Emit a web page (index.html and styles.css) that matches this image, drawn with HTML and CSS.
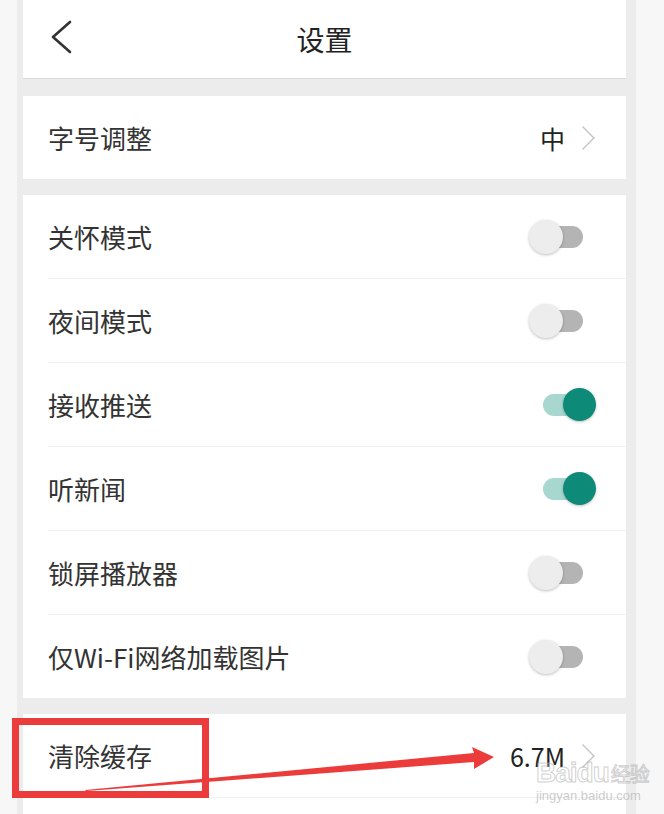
FILE: index.html
```html
<!DOCTYPE html>
<html lang="zh-CN">
<head>
    <meta charset="UTF-8">
    <meta name="viewport" content="width=device-width, initial-scale=1.0">
    <title>设置</title>
    <link rel="stylesheet" href="styles.css">
</head>
<body>
    <div class="moldura">
        <div class="tela">
            <div class="topo">
                <svg class="voltar" width="24" height="36" viewBox="0 0 24 36">
                    <polyline points="19,2 2,17 19,32" fill="none" stroke="#333" stroke-width="2.6" stroke-linecap="round" stroke-linejoin="round"/>
                </svg>
                <h1>设置</h1>
            </div>

            <div class="grupo">
                <div class="linha">
                    <span class="rotulo">字号调整</span>
                    <span class="valor">中<span class="seta"></span></span>
                </div>
            </div>

            <div class="grupo">
                <div class="linha">
                    <span class="rotulo">关怀模式</span>
                    <span class="chave"><span class="trilho"></span><span class="bolinha"></span></span>
                </div>
                <div class="linha">
                    <span class="rotulo">夜间模式</span>
                    <span class="chave"><span class="trilho"></span><span class="bolinha"></span></span>
                </div>
                <div class="linha">
                    <span class="rotulo">接收推送</span>
                    <span class="chave ligada"><span class="trilho"></span><span class="bolinha"></span></span>
                </div>
                <div class="linha">
                    <span class="rotulo">听新闻</span>
                    <span class="chave ligada"><span class="trilho"></span><span class="bolinha"></span></span>
                </div>
                <div class="linha">
                    <span class="rotulo">锁屏播放器</span>
                    <span class="chave"><span class="trilho"></span><span class="bolinha"></span></span>
                </div>
                <div class="linha">
                    <span class="rotulo">仅Wi-Fi网络加载图片</span>
                    <span class="chave"><span class="trilho"></span><span class="bolinha"></span></span>
                </div>
            </div>

            <div class="grupo ultimo">
                <div class="linha">
                    <span class="rotulo">清除缓存</span>
                    <span class="valor">6.7M<span class="seta"></span></span>
                </div>
            </div>
        </div>
    </div>

    <!-- marcacao vermelha por cima da captura -->
    <svg class="marcacao" width="664" height="814" viewBox="0 0 664 814">
        <rect x="15.5" y="721.5" width="190" height="73" fill="none" stroke="#ec3b3b" stroke-width="7"/>
        <polygon points="85,790 474,753 472,747 494,757 474,769 474,762 86,791" fill="#ec3b3b"/>
    </svg>

    <div class="marca-dagua">
        <span class="marca-logo">Baidu<small>经验</small></span>
        <span class="marca-url">jingyan.baidu.com</span>
    </div>
</body>
</html>
```

FILE: styles.css
```css
body {
    margin: 0;
    background-color: #f7f7f7;
    font-family: "Noto Sans CJK SC", "Noto Sans", sans-serif;
    color: #333;
    width: 664px;
    height: 814px;
    overflow: hidden;
    position: relative;
}
.moldura {
    margin-left: 17px;
    width: 619px;
    height: 814px;
    background-color: #ececec;
    padding: 0 10px 0 6px;
    box-sizing: border-box;
}
.tela {
    width: 603px;
}
.topo {
    height: 78px;
    background-color: #fff;
    border-bottom: 1px solid #dcdcdc;
    display: flex;
    align-items: center;
    justify-content: center;
    position: relative;
}
.voltar {
    position: absolute;
    left: 28px;
    top: 20px;
}
h1 {
    margin: 0;
    font-size: 28px;
    font-weight: normal;
    color: #222;
}
.grupo {
    background-color: #fff;
    margin-top: 17px;
}
.grupo + .grupo {
    margin-top: 16px;
}
.linha {
    height: 83px;
    display: flex;
    align-items: center;
    justify-content: space-between;
    margin-left: 25px;
    border-bottom: 1px solid #f0f0f0;
}
.grupo > .linha:last-child {
    border-bottom: none;
}
.grupo.ultimo {
    height: 120px;
}
.grupo.ultimo > .linha:last-child {
    border-bottom: 1px solid #f0f0f0;
}
.rotulo {
    font-size: 26px;
    color: #333;
}
.valor {
    font-size: 25px;
    color: #222;
    display: flex;
    align-items: center;
    margin-right: 33px;
}
.seta {
    width: 11px;
    height: 11px;
    border-top: 1.6px solid #c6c6c6;
    border-right: 1.6px solid #c6c6c6;
    transform: rotate(45deg) scaleY(1.4) scaleX(1.4);
    margin-left: 12px;
    margin-right: 4px;
}
.chave {
    position: relative;
    width: 68px;
    height: 34px;
    margin-right: 29px;
}
.trilho {
    position: absolute;
    left: 12px;
    right: 14px;
    top: 6px;
    height: 22px;
    border-radius: 11px;
    background-color: #b4b4b4;
}
.bolinha {
    position: absolute;
    left: 0;
    top: 0;
    width: 34px;
    height: 34px;
    border-radius: 50%;
    background-color: #ededed;
    box-shadow: 0 1px 3px rgba(0, 0, 0, 0.25);
}
.chave.ligada .trilho {
    left: 14px;
    background-color: #a7d7cf;
}
.chave.ligada .bolinha {
    left: auto;
    right: 1px;
    width: 33px;
    height: 33px;
    background-color: #0e8a78;
}
.marcacao {
    position: absolute;
    left: 0;
    top: 0;
}
.marca-dagua {
    position: absolute;
    left: 536px;
    top: 758px;
    display: flex;
    flex-direction: column;
    font-family: "Liberation Sans", sans-serif;
    color: rgba(255, 255, 255, 0.2);
}
.marca-logo {
    font-size: 28px;
    font-weight: bold;
    line-height: 30px;
    letter-spacing: -1px;
    -webkit-text-stroke: 1px rgba(175, 175, 175, 0.6);
}
.marca-logo small {
    font-family: "Noto Sans CJK SC", sans-serif;
    font-size: 20px;
    font-weight: normal;
    margin-left: 2px;
}
.marca-url {
    font-size: 13px;
    line-height: 14px;
    color: rgba(180, 180, 180, 0.7);
}
```
